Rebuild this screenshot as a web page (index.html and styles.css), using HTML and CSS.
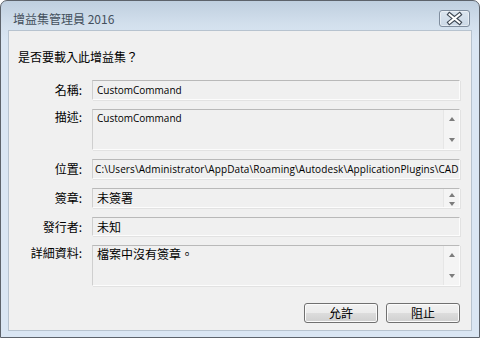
FILE: index.html
```html
<!DOCTYPE html>
<html lang="zh-Hant">
<head>
<meta charset="utf-8">
<title>增益集管理員 2016</title>
<link rel="stylesheet" href="styles.css">
</head>
<body>
<div class="window">
  <div class="titlebar">
    <span class="title">增益集管理員 2016</span>
    <div class="close">
      <svg width="29" height="15" viewBox="0 0 29 15">
        <path d="M9.5 3.5 L19.5 11.5 M19.5 3.5 L9.5 11.5" stroke="#3d4753" stroke-width="4.2" stroke-linecap="square" fill="none"/>
        <path d="M9.5 3.5 L19.5 11.5 M19.5 3.5 L9.5 11.5" stroke="#ffffff" stroke-width="2" stroke-linecap="square" fill="none"/>
      </svg>
    </div>
  </div>
  <div class="client">
    <div class="question">是否要載入此增益集？</div>
    <div class="form">
      <div class="label">名稱:</div>
      <div class="field"><span class="txt en">CustomCommand</span></div>

      <div class="label top">描述:</div>
      <div class="field tall"><span class="txt en">CustomCommand</span>
        <div class="sb"><span class="up"></span><span class="down"></span></div>
      </div>

      <div class="label">位置:</div>
      <div class="field"><span class="txt en path">C:\Users\Administrator\AppData\Roaming\Autodesk\ApplicationPlugins\CAD</span></div>

      <div class="label">簽章:</div>
      <div class="field"><span class="txt">未簽署</span>
        <div class="sb small"><span class="up"></span><span class="down"></span></div>
      </div>

      <div class="label">發行者:</div>
      <div class="field h19"><span class="txt">未知</span></div>

      <div class="label top">詳細資料:</div>
      <div class="field tall"><span class="txt">檔案中沒有簽章。</span>
        <div class="sb"><span class="up"></span><span class="down"></span></div>
      </div>
    </div>
    <div class="buttons">
      <button class="btn">允許</button>
      <button class="btn">阻止</button>
    </div>
  </div>
</div>
</body>
</html>
```
FILE: styles.css
```css
html, body {
  margin: 0;
  padding: 0;
  width: 480px;
  height: 338px;
  overflow: hidden;
  background: #ffffff;
}
body {
  font-family: "Noto Sans CJK TC", "Noto Sans CJK SC", sans-serif;
  font-size: 12px;
  color: #000;
}
.window {
  box-sizing: border-box;
  width: 480px;
  height: 338px;
  border: 1px solid #5d636b;
  border-radius: 7px 7px 0 0;
  background: linear-gradient(#bfcfdf 0px, #d3e0ed 24px, #dae6f3 40px, #dae6f3 100%);
  padding: 0 7px 6px 7px;
  display: flex;
  flex-direction: column;
}
.titlebar {
  height: 29px;
  display: flex;
  align-items: flex-start;
}
.title {
  margin-left: 5px;
  padding-top: 10px;
  line-height: 16px;
  font-size: 12px;
  color: #44505d;
}
.close {
  margin-left: auto;
  margin-top: 9px;
  margin-right: 2px;
  width: 31px;
  height: 17px;
  box-sizing: border-box;
  border: 1px solid #7f8d9e;
  border-radius: 3px;
  background: linear-gradient(#dbe5ef, #cbd8e6);
  box-shadow: inset 0 0 0 1px rgba(255,255,255,0.45);
  display: flex;
  align-items: center;
  justify-content: center;
}
.close svg { display: block; }
.client {
  box-sizing: border-box;
  height: 301px;
  background: #f0f0f0;
  border: 1px solid #b7c3cf;
  padding: 18px 11px 0 9px;
}
.question {
  height: 16px;
  line-height: 16px;
  margin-bottom: 15px;
}
.form {
  display: grid;
  grid-template-columns: 64px 368px;
  column-gap: 10px;
  row-gap: 9px;
  align-items: start;
}
.label {
  text-align: right;
  line-height: 14px;
  padding-top: 3px;
  white-space: nowrap;
}
.label.top { padding-top: 1px; }
.field {
  box-sizing: border-box;
  height: 20px;
  border: 1px solid;
  border-color: #b9b9b9 #fcfcfc #fcfcfc #cfcfcf;
  box-shadow: 1px 1px 0 #e2e2e2;
  display: flex;
  overflow: hidden;
  background: #f0f0f0;
}
.field.h19 { height: 19px; }
.field.tall { height: 41px; }
.txt {
  flex: 1;
  min-width: 0;
  padding-left: 4px;
  line-height: 18px;
  white-space: nowrap;
  overflow: hidden;
}
.field.tall .txt { line-height: 16px; }
.en {
  font-family: "Open Sans", "Noto Sans", sans-serif;
  font-size: 10px;
}
.path {
  padding-left: 2px;
  letter-spacing: 0.1px;
}
.sb {
  box-sizing: border-box;
  width: 16px;
  flex: none;
  border-left: 1px solid #e6e6e6;
  background: #f4f4f4;
  display: flex;
  flex-direction: column;
  align-items: center;
  justify-content: space-between;
  padding: 7px 0;
}
.sb.small { padding: 4px 0 1px; }
.up, .down {
  display: block;
  width: 0;
  height: 0;
  border-left: 3.5px solid transparent;
  border-right: 3.5px solid transparent;
}
.up { border-bottom: 4px solid #7c7c7c; }
.down { border-top: 4px solid #7c7c7c; }
.buttons {
  display: flex;
  justify-content: flex-end;
  gap: 8px;
  margin-top: 17px;
}
.btn {
  box-sizing: border-box;
  width: 74px;
  height: 20px;
  padding: 0;
  border: 1px solid #707070;
  border-radius: 3px;
  background: linear-gradient(#f2f2f2 0%, #ebebeb 50%, #dddddd 50%, #cfcfcf 100%);
  box-shadow: inset 0 0 0 1px #fbfbfb;
  font-family: "Noto Sans CJK TC", sans-serif;
  font-size: 12px;
  line-height: 16px;
  color: #000;
}
```
